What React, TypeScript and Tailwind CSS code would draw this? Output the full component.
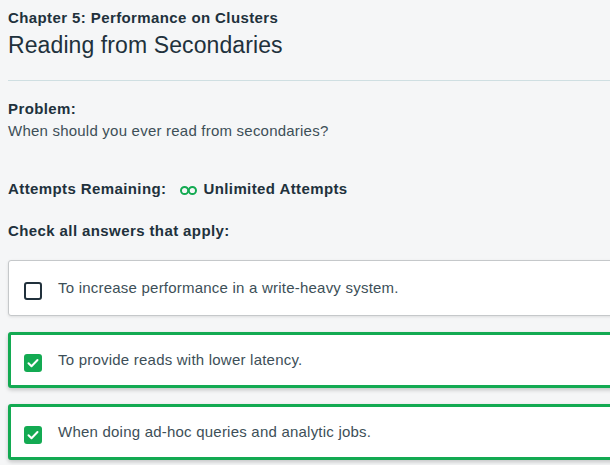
import React from "react";

const answers = [
  { text: "To increase performance in a write-heavy system.", checked: false },
  { text: "To provide reads with lower latency.", checked: true },
  { text: "When doing ad-hoc queries and analytic jobs.", checked: true },
];

const Infinity: React.FC = () => (
  <svg width="17" height="11" viewBox="0 0 17 11" fill="none" className="mr-[6px] mt-[2px]">
    <circle cx="4.6" cy="5.5" r="3.6" stroke="#13aa52" strokeWidth="2" />
    <circle cx="12.4" cy="5.5" r="3.6" stroke="#13aa52" strokeWidth="2" />
  </svg>
);

const Box: React.FC<{ checked: boolean }> = ({ checked }) =>
  checked ? (
    <div className="w-[18px] h-[18px] rounded-[3px] bg-[#13aa52] flex items-center justify-center shrink-0">
      <svg width="12" height="10" viewBox="0 0 12 10" fill="none">
        <path d="M1.5 5.2l3 3 6-6.2" stroke="white" strokeWidth="2" strokeLinecap="round" strokeLinejoin="round" />
      </svg>
    </div>
  ) : (
    <div className="w-[18px] h-[18px] rounded-[3px] border-2 border-[#21313c] bg-white shrink-0" />
  );

const App: React.FC = () => {
  return (
    <div className="min-h-screen w-full overflow-hidden bg-[#f5f6f7] text-[#21313c] font-['Liberation_Sans',Arial,sans-serif]">
      <div className="pl-2 pt-[8px]">
        <div className="text-[15px] font-bold leading-[20px] tracking-[0.4px]">Chapter 5: Performance on Clusters</div>
        <h1 className="text-[23px] font-light leading-[30px] mt-[2px] tracking-[0.1px]">Reading from Secondaries</h1>
        <div className="h-px bg-[#cfdfe2] mt-[20px]" />

        <div className="mt-[18px] text-[15px] font-bold leading-[20px] tracking-[0.4px]">Problem:</div>
        <div className="text-[15px] leading-[20px] mt-[2px] text-[#3d4f58] tracking-[0.22px]">When should you ever read from secondaries?</div>

        <div className="mt-[38px] flex items-center text-[15px] font-bold leading-[20px] tracking-[0.4px]">
          <span className="mr-[14px]">Attempts Remaining:</span>
          <Infinity />
          <span>Unlimited Attempts</span>
        </div>

        <div className="mt-[22px] text-[15px] font-bold leading-[20px] tracking-[0.4px]">Check all answers that apply:</div>

        <div className="mt-[19px] flex flex-col gap-[16px] w-[calc(100%+20px)]">
          {answers.map((a) => (
            <div
              key={a.text}
              className={
                a.checked
                  ? "h-[56px] bg-white rounded-[3px] border-[3px] border-[#13aa52] shadow-[0_2px_4px_rgba(0,0,0,0.2)] flex items-center pl-[13px]"
                  : "h-[56px] bg-white rounded-[3px] border border-[#c5c8ca] shadow-[0_1px_3px_rgba(0,0,0,0.1)] flex items-center pl-[15px]"
              }
            >
              <div className="mt-[6px]">
                <Box checked={a.checked} />
              </div>
              <span className="ml-4 text-[15px] text-[#3d4f58] mt-[1px] tracking-[0.22px]">{a.text}</span>
            </div>
          ))}
        </div>
      </div>
    </div>
  );
};

export default App;
